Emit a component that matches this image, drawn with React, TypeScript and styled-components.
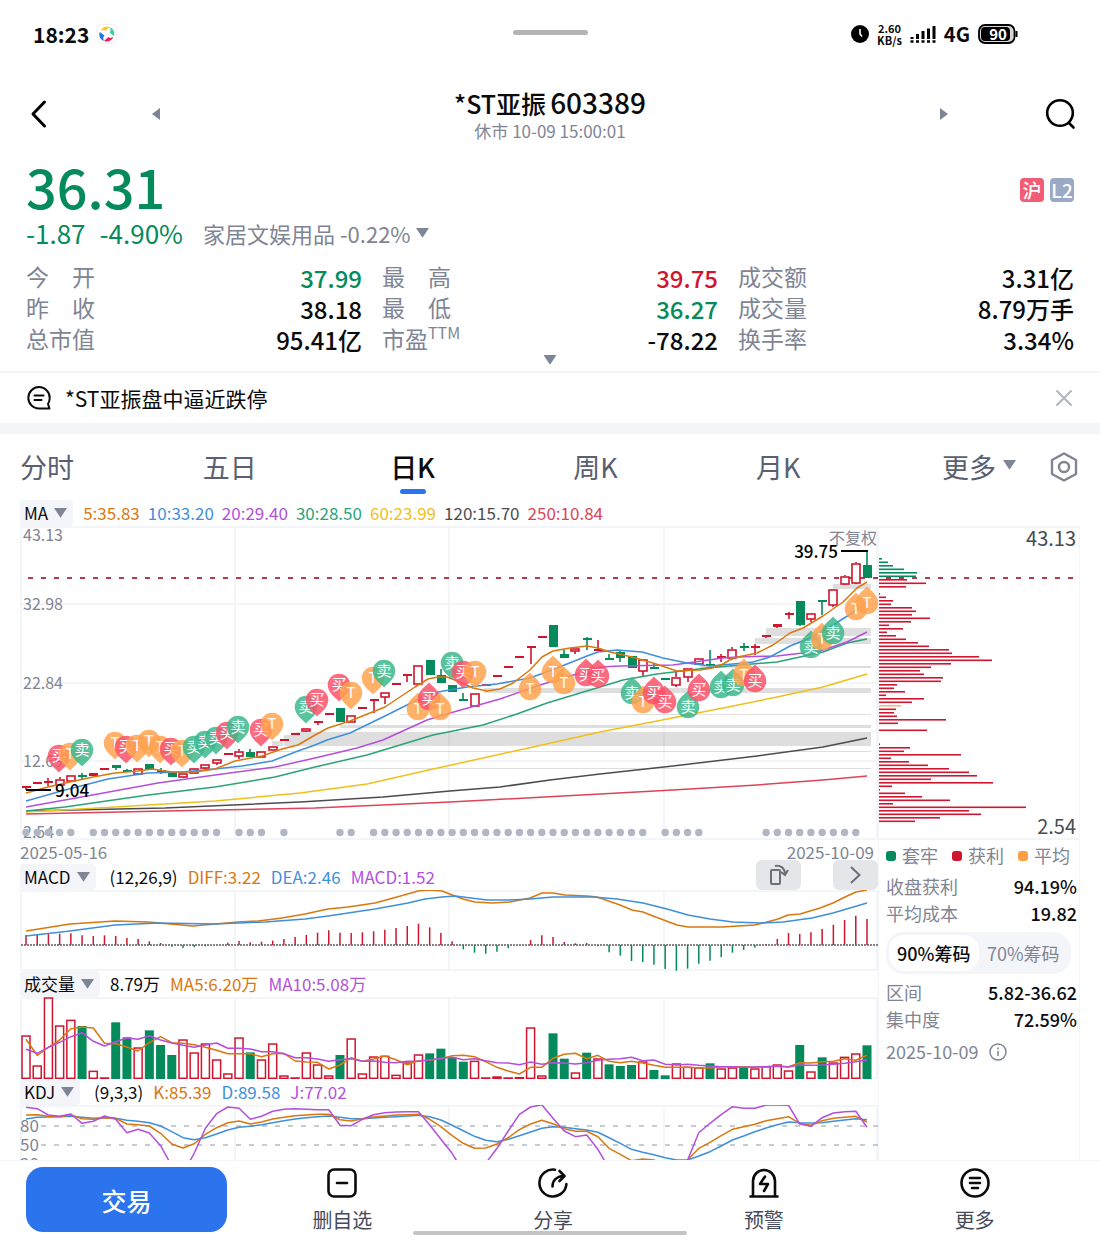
import React from "react";
import styled, { createGlobalStyle } from "styled-components";

const c = {
  ink: "#0b0b0d",
  label: "#7f8594",
  tab: "#5a6072",
  green: "#058a5c",
  red: "#d0152f",
  orange: "#d9780f",
  blue: "#3f8fdc",
  purple: "#b44fdc",
  teal: "#2aa376",
  yellow: "#efc01c",
  dark: "#4c4c50",
  rose: "#dd4457",
  line: "#f4f5f9",
  wash: "#f4f5f9",
  brand: "#2b74ee",
};

const GlobalStyle = createGlobalStyle`
  *, *::before, *::after { box-sizing: border-box; }
  body { margin: 0; background: #fff; color: ${c.ink}; font-family: "Noto Sans CJK SC", "Noto Sans", sans-serif; }
  button { font: inherit; color: inherit; background: none; border: 0; padding: 0; cursor: pointer; }
  h1, p, dl, dd { margin: 0; }
  svg { display: block; flex: none; }
`;

const Page = styled.main`
  position: relative;
  background: #fff;
`;

/* ---------- status bar ---------- */

const StatusBar = styled.div`
  display: grid;
  grid-template-columns: 1fr auto 1fr;
  align-items: center;
  height: 68px;
  padding: 0 82px 0 33px;
`;

const StatusSide = styled.div<{ $end?: boolean }>`
  display: flex;
  align-items: center;
  gap: 8px;
  justify-content: ${(p) => (p.$end ? "flex-end" : "flex-start")};
`;

const Clock = styled.span`
  font-size: 21px;
  line-height: 28px;
  font-weight: 700;
`;

const Handle = styled.div`
  width: 75px;
  height: 5px;
  margin-left: 49px;
  margin-bottom: 4px;
  border-radius: 3px;
  background: #b4b4b4;
`;

const Speed = styled.span`
  font-size: 11px;
  line-height: 12px;
  font-weight: 700;
  text-align: center;
`;

const Network = styled.span`
  font-size: 20px;
  line-height: 28px;
  font-weight: 700;
`;

/* ---------- header ---------- */

const Header = styled.header`
  display: grid;
  grid-template-columns: 138px 1fr 138px;
  align-items: center;
  height: 92px;
  padding: 0 24px;
`;

const HeaderSide = styled.div<{ $end?: boolean }>`
  display: flex;
  align-items: center;
  justify-content: space-between;
  flex-direction: ${(p) => (p.$end ? "row-reverse" : "row")};
`;

const IconButton = styled.button`
  display: flex;
  align-items: center;
  justify-content: center;
`;

const Heading = styled.div`
  text-align: center;
`;

const Title = styled.h1`
  font-size: 25px;
  line-height: 32px;
  font-weight: 500;
`;

const Code = styled.span`
  margin-left: 4px;
  font-size: 28px;
`;

const Subtitle = styled.p`
  font-size: 17px;
  line-height: 24px;
  color: ${c.label};
`;

/* ---------- quote ---------- */

const Quote = styled.section`
  position: relative;
  padding: 0 26px;
  height: 213px;
  border-bottom: 2px solid ${c.line};
`;

const PriceRow = styled.div`
  display: flex;
  align-items: flex-end;
  justify-content: space-between;
`;

const Price = styled.span`
  font-size: 54px;
  line-height: 52px;
  font-weight: 500;
  color: ${c.green};
`;

const Badges = styled.div`
  display: flex;
  gap: 6px;
  margin-bottom: 10px;
`;

const Badge = styled.span<{ $bg: string }>`
  width: 24px;
  height: 24px;
  border-radius: 4px;
  background: ${(p) => p.$bg};
  color: #fff;
  font-size: 19px;
  line-height: 24px;
  font-weight: 500;
  text-align: center;
`;

const ChangeRow = styled.div`
  display: flex;
  align-items: center;
  height: 32px;
  margin-top: 5px;
  font-size: 26px;
  line-height: 32px;
  color: ${c.green};
`;

const Change = styled.span`
  margin-right: 14px;
`;

const Sector = styled.button`
  display: flex;
  align-items: center;
  gap: 5px;
  margin-left: 6px;
  font-size: 22px;
  line-height: 32px;
  color: ${c.label};
`;

const Stats = styled.dl`
  display: grid;
  grid-template-columns: repeat(3, 1fr);
  column-gap: 20px;
  margin-top: 13px;
`;

const Stat = styled.div`
  display: flex;
  justify-content: space-between;
  height: 31px;
`;

const StatName = styled.dt`
  font-size: 23px;
  line-height: 28px;
  color: ${c.label};
  white-space: pre;
`;

const Sup = styled.sup`
  font-size: 16px;
  line-height: 0;
`;

const StatValue = styled.dd<{ $color?: string }>`
  font-size: 24px;
  line-height: 31px;
  font-weight: 500;
  color: ${(p) => p.$color ?? c.ink};
`;

const Expand = styled.button`
  position: absolute;
  left: 50%;
  bottom: 4px;
  transform: translateX(-50%);
`;

/* ---------- news ---------- */

const News = styled.section`
  display: flex;
  align-items: center;
  gap: 14px;
  height: 50px;
  padding: 0 27px;
`;

const NewsLink = styled.a`
  flex: 1;
  font-size: 21px;
  line-height: 30px;
  color: ${c.ink};
  text-decoration: none;
`;

const Band = styled.div`
  height: 11px;
  background: ${c.wash};
`;

/* ---------- period tabs ---------- */

const TabBar = styled.nav`
  display: flex;
  align-items: flex-start;
  gap: 53px;
  height: 66px;
  padding: 12px 21px 0 20px;
`;

const Tabs = styled.div`
  flex: 1;
  display: flex;
  align-items: flex-start;
  justify-content: space-between;
`;

const Tab = styled.button<{ $active?: boolean; $last?: boolean }>`
  position: relative;
  width: 54px;
  margin-left: ${(p) => (p.$last ? "8px" : "0")};
  font-size: 27px;
  line-height: 42px;
  font-weight: ${(p) => (p.$active ? 500 : 400)};
  color: ${(p) => (p.$active ? c.ink : c.tab)};
  white-space: nowrap;

  &::after {
    content: "";
    display: ${(p) => (p.$active ? "block" : "none")};
    width: 26px;
    height: 5px;
    margin: 1px auto 0;
    border-radius: 3px;
    background: ${c.brand};
  }
`;

const TabCaret = styled.span`
  position: absolute;
  left: 61px;
  top: 13px;
`;

/* ---------- charts ---------- */

const Board = styled.section`
  display: grid;
  grid-template-columns: minmax(0, 1fr) 202px;
  padding: 0 20px;
`;

const ChartColumn = styled.div`
  min-width: 0;
`;

const SideColumn = styled.aside`
  margin-top: 26px;
  border: solid ${c.line};
  border-width: 0 1px;
`;

const LegendRow = styled.div<{ $gap: number }>`
  position: relative;
  display: flex;
  align-items: center;
  gap: ${(p) => p.$gap}px;
  height: 26px;
  font-size: 17px;
  line-height: 26px;
  white-space: nowrap;
`;

const Picker = styled.button`
  display: flex;
  align-items: center;
  gap: 6px;
  height: 26px;
  padding: 0 6px 0 4px;
  border-radius: 4px;
  background: ${c.wash};
`;

const Readings = styled.div<{ $gap: number }>`
  display: flex;
  gap: ${(p) => p.$gap}px;
`;

const Reading = styled.span<{ $color?: string }>`
  color: ${(p) => p.$color ?? c.ink};
`;

const Plot = styled.svg`
  width: 100%;
  height: auto;
  font-family: "Noto Sans CJK SC", "Noto Sans", sans-serif;
`;

const DateRow = styled.div`
  display: flex;
  justify-content: space-between;
  height: 24px;
  padding-right: 4px;
  font-size: 17px;
  line-height: 24px;
  color: ${c.label};
`;

const Tools = styled.div`
  position: absolute;
  right: 0;
  top: -4px;
  display: flex;
  gap: 32px;
`;

const Tool = styled.button`
  display: flex;
  align-items: center;
  justify-content: center;
  width: 45px;
  height: 30px;
  border-radius: 6px;
  background: #e5e6e9;
`;

/* ---------- chip panel ---------- */

const ChipPanel = styled.div`
  padding: 2px 2px 0 7px;
  font-size: 18px;
  line-height: 27px;
  color: ${c.label};
`;

const ChipLegend = styled.div`
  display: flex;
  justify-content: space-between;
  height: 31px;
  padding-right: 7px;
`;

const ChipKey = styled.span<{ $color: string }>`
  display: flex;
  align-items: center;
  gap: 6px;
  height: 27px;

  &::before {
    content: "";
    width: 10px;
    height: 10px;
    border-radius: 3px;
    background: ${(p) => p.$color};
  }
`;

const ChipRow = styled.div`
  display: flex;
  justify-content: space-between;
`;

const ChipValue = styled.dd`
  color: ${c.ink};
  font-weight: 500;
`;

const Segment = styled.div`
  display: flex;
  width: 185px;
  height: 42px;
  margin: 5px 0;
  padding: 3px;
  border-radius: 18px;
  background: ${c.wash};
`;

const SegmentButton = styled.button<{ $active?: boolean }>`
  flex: 1;
  border-radius: 15px;
  line-height: 36px;
  white-space: nowrap;
  background: ${(p) => (p.$active ? "#fff" : "transparent")};
  color: ${(p) => (p.$active ? c.ink : c.label)};
  font-weight: ${(p) => (p.$active ? 500 : 400)};
`;

const ChipDate = styled.p`
  display: flex;
  align-items: center;
  gap: 11px;
  margin-top: 5px;
`;

/* ---------- bottom bar ---------- */

const BottomBar = styled.footer`
  position: relative;
  display: flex;
  height: 80px;
  padding: 6px 20px 8px 26px;
  background: #fff;
  border-top: 1px solid ${c.line};
`;

const Trade = styled.button`
  width: 201px;
  height: 65px;
  margin-right: 10px;
  border-radius: 17px;
  background: ${c.brand};
  color: #fff;
  font-size: 25px;
  font-weight: 500;
`;

const Action = styled.button`
  flex: 1;
  display: flex;
  flex-direction: column;
  align-items: center;
  gap: 6px;
  font-size: 20px;
  line-height: 30px;
  color: #464b5a;
`;

const HomeBar = styled.div`
  position: absolute;
  left: 50%;
  bottom: 5px;
  width: 274px;
  height: 4px;
  margin-left: -137px;
  border-radius: 2px;
  background: #c4c4c4;
`;

/* ---------- data ---------- */

const COUNT = 76;
const cx = (i: number) => 26 + (841 * i) / (COUNT - 1);

type Candle = [top: number, bottom: number, high: number, low: number, kind: "r" | "g" | "f"];

// r: hollow rise, f: thin filled rise, g: fall
const candles: Candle[] = [
  [786, 788, 786, 790, "f"], [782, 784, 782, 784, "f"], [781, 783, 778, 786, "f"], [779, 785, 777, 785, "r"],
  [775, 781, 775, 781, "r"], [775, 777, 773, 779, "g"], [773, 776, 773, 776, "f"], [768, 770, 768, 770, "f"],
  [765, 768, 765, 770, "g"], [770, 772, 769, 772, "g"], [768, 774, 768, 774, "r"], [764, 769, 764, 770, "g"],
  [770, 772, 768, 774, "g"], [773, 777, 773, 777, "g"], [773, 777, 773, 778, "r"], [768, 773, 768, 773, "r"],
  [764, 768, 764, 769, "r"], [759, 763, 759, 765, "r"], [753, 755, 753, 755, "f"], [751, 756, 749, 759, "r"],
  [752, 757, 749, 757, "g"], [751, 757, 751, 757, "r"], [746, 750, 746, 750, "r"], [739, 741, 739, 741, "f"],
  [733, 735, 733, 735, "f"], [728, 731, 728, 732, "r"], [721, 723, 721, 725, "f"], [713, 715, 713, 715, "f"],
  [708, 722, 708, 722, "g"], [715, 722, 715, 722, "r"], [707, 709, 707, 709, "f"], [699, 701, 699, 713, "f"],
  [692, 697, 692, 704, "r"], [683, 685, 683, 685, "f"], [674, 676, 674, 682, "f"], [665, 684, 665, 684, "r"],
  [660, 675, 660, 675, "g"], [675, 683, 669, 683, "g"], [685, 692, 685, 692, "g"], [699, 701, 693, 701, "g"],
  [693, 706, 693, 706, "r"], [684, 686, 684, 686, "f"], [675, 677, 675, 677, "f"], [666, 668, 666, 668, "f"],
  [656, 658, 656, 658, "f"], [646, 648, 646, 664, "f"], [636, 638, 636, 638, "f"], [625, 647, 625, 647, "g"],
  [654, 658, 650, 658, "g"], [648, 651, 648, 654, "r"], [638, 640, 637, 650, "g"], [649, 651, 640, 651, "f"],
  [658, 660, 654, 660, "g"], [652, 658, 651, 662, "g"], [656, 668, 656, 668, "g"], [659, 671, 659, 676, "r"],
  [667, 669, 664, 669, "g"], [678, 680, 678, 680, "g"], [677, 685, 672, 687, "r"], [668, 677, 668, 682, "r"],
  [658, 664, 658, 664, "r"], [664, 666, 650, 666, "g"], [656, 658, 654, 662, "f"], [649, 658, 647, 660, "r"],
  [646, 648, 643, 651, "g"], [646, 648, 644, 655, "f"], [635, 637, 635, 638, "f"], [624, 627, 624, 628, "f"],
  [613, 615, 612, 619, "f"], [601, 625, 601, 626, "g"], [613, 619, 613, 622, "r"], [600, 602, 600, 615, "g"],
  [589, 605, 589, 607, "r"], [576, 584, 575, 585, "r"], [563, 583, 562, 584, "r"], [565, 578, 551, 578, "g"],
];

const averages: [string, string][] = [
  [c.rose, "26,814 165,811 315,808 450,802 600,794 673,790 757,785 823,780 867,776"],
  [c.dark, "26,811 165,808 300,802 383,797 450,791 500,787 550,780 600,774 673,766 757,756 823,747 867,738"],
  [c.yellow, "26,812 115,807 215,801 300,793 367,784 433,769 483,758 533,747 600,732 657,721 723,708 777,697 823,687 867,674"],
  [c.teal, "26,811 65,807 148,795 215,787 275,777 315,767 367,755 433,735 483,725 517,714 547,703 600,687 623,680 657,674 707,668 740,665 777,662 823,652 847,643 867,639"],
  [c.purple, "26,807 87,796 158,783 215,775 275,767 315,758 357,748 383,740 427,720 450,713 500,699 540,685 577,674 600,667 620,666 673,665 723,658 737,657 777,656 820,651 847,642 867,632"],
  [c.blue, "26,801 65,790 108,779 148,773 182,772 215,769 242,766 272,761 298,751 315,745 327,740 350,733 383,717 417,700 438,692 467,687 497,684 530,678 557,668 587,656 598,652 617,650 642,652 663,658 687,663 710,666 733,664 753,662 770,657 790,646 810,638 833,625 857,610 867,602"],
  [c.orange, "26,793 48,787 70,782 93,777 115,773 138,771 152,769 172,772 195,772 215,769 235,761 262,756 282,749 298,745 315,735 328,728 350,721 385,707 400,697 415,687 428,679 438,677 447,677 460,682 473,688 487,691 500,689 513,683 530,670 542,657 553,651 570,648 587,646 598,648 610,652 632,657 653,663 677,671 700,670 712,668 723,664 733,658 757,653 773,645 790,633 803,628 823,616 843,602 857,588 867,582"],
];

type Pin = [x: number, y: number, mark: "买" | "卖" | "T", up: 0 | 1];

const pins: Pin[] = [
  [59, 756, "买", 0], [70, 754, "T", 0], [82, 750, "卖", 0], [115, 743, "T", 0], [126, 747, "买", 0], [137, 746, "T", 0],
  [149, 741, "T", 0], [160, 747, "T", 0], [171, 749, "买", 0], [182, 751, "T", 0], [194, 747, "卖", 0], [205, 742, "卖", 0],
  [216, 738, "卖", 0], [227, 733, "买", 0], [238, 727, "卖", 0], [261, 730, "买", 0], [272, 724, "T", 0], [306, 707, "卖", 0],
  [317, 700, "买", 0], [339, 685, "买", 0], [351, 693, "T", 0], [373, 678, "T", 0], [384, 671, "卖", 0], [418, 709, "T", 1],
  [429, 699, "买", 1], [440, 709, "T", 1], [452, 663, "卖", 0], [463, 672, "买", 0], [475, 672, "T", 0], [530, 689, "T", 1],
  [553, 672, "T", 1], [564, 683, "T", 1], [586, 675, "买", 1], [598, 676, "买", 1], [632, 693, "卖", 1], [643, 702, "T", 1],
  [654, 693, "买", 1], [665, 702, "买", 1], [688, 707, "卖", 1], [699, 690, "买", 1], [721, 687, "卖", 1], [733, 685, "卖", 1],
  [744, 675, "T", 1], [755, 681, "买", 1], [811, 647, "卖", 1], [822, 639, "T", 1], [833, 633, "卖", 1], [856, 609, "T", 1],
  [867, 603, "T", 1],
];

const pinColor = { 买: "#fb5068", 卖: "#3ab88c", T: "#ffa24c" };

const dotRuns = [[0, 4], [6, 17], [19, 21], [23, 23], [28, 29], [31, 55], [57, 60], [66, 74]];

const gaps: [number, number, number][] = [
  [833, 584, 5], [766, 628, 8], [755, 638, 6], [700, 666, 2], [484, 688, 5], [400, 714, 1], [340, 725, 3],
  [295, 732, 14], [284, 735, 11], [272, 741, 5], [261, 751, 1], [194, 768, 1],
];

// Length of each price level's bar; the level step is constant.
const levels = [
  4, 10, 15, 26, 39, 38, 29, 48, 28, 0, 2, 8, 15, 13, 34, 38, 34, 52, 33, 11, 25, 9, 18, 28, 40, 51, 71, 74, 101, 114, 73,
  53, 42, 46, 65, 63, 19, 16, 27, 8, 46, 34, 23, 18, 16, 19, 68, 20, 0, 49, 0, 1, 0, 2, 32, 26, 83, 13, 31, 50, 71, 91, 99,
  53, 115, 14, 2, 27, 44, 72, 15, 148, 91, 103, 62, 37,
];

// Indicator series are kept in thirds of a plot unit, measured down from the axis row.
const row = (v: number) => 840 + v / 3;
const path = (s: number[]) => s.map((v, i) => `${cx(i).toFixed(1)},${row(v).toFixed(1)}`).join(" ");

const macd = [
  285, 283, 281, 281, 280, 286, 288, 286, 288, 294, 297, 304, 309, 320, 324, 322, 319, 315, 308, 303, 307, 305, 302, 297, 291,
  285, 278, 271, 278, 279, 277, 274, 269, 264, 258, 251, 262, 279, 304, 328, 338, 341, 335, 325, 315, 300, 286, 291, 306, 310,
  309, 319, 337, 347, 363, 366, 374, 387, 392, 386, 371, 362, 352, 338, 330, 323, 312, 297, 279, 282, 277, 267, 254, 240, 227,
  237,
];

const diff =
  "26,931 70,924 115,921 148,922 170,924 193,926 215,924 238,922 258,921 282,918 305,914 328,909 348,907 375,903 397,897 418,891 430,890 442,891 455,896 463,899 475,902 492,903 510,902 530,898 542,893 553,893 565,895 587,896 597,897 620,905 632,910 643,912 653,916 677,925 688,927 722,927 755,925 767,922 778,919 788,915 800,914 820,908 833,903 845,897 856,892 867,890";
const dea =
  "26,936 70,931 115,925 158,923 215,924 265,922 305,919 328,916 375,909 408,903 425,899 442,897 455,896 463,897 487,900 510,900 530,899 553,897 593,897 617,899 643,903 667,909 688,915 710,919 733,922 760,923 783,922 812,918 833,913 850,908 867,903";

const volume = [
  586, 676, 472, 556, 539, 558, 692, 712, 547, 592, 622, 571, 615, 645, 598, 637, 610, 658, 700, 592, 637, 658, 610, 706, 712,
  637, 673, 706, 645, 595, 700, 649, 647, 704, 667, 643, 640, 626, 652, 665, 662, 712, 709, 712, 711, 562, 706, 580, 656, 697,
  638, 655, 673, 678, 675, 664, 690, 706, 670, 680, 682, 670, 685, 682, 682, 685, 678, 673, 691, 615, 694, 652, 667, 650, 640,
  616,
];
const falls = new Set([5, 8, 9, 11, 12, 13, 20, 28, 36, 37, 38, 39, 47, 48, 50, 52, 53, 54, 56, 57, 61, 64, 69, 71, 75]);
const vol5 = [
  598, 646, 622, 600, 566, 561, 564, 610, 611, 621, 633, 608, 590, 608, 610, 614, 622, 631, 641, 641, 641, 650, 641, 640, 663,
  666, 667, 687, 675, 653, 664, 657, 648, 659, 674, 662, 660, 656, 647, 646, 650, 665, 682, 693, 702, 682, 682, 655, 643, 640,
  656, 646, 664, 668, 664, 669, 676, 682, 682, 682, 684, 684, 680, 680, 680, 682, 680, 678, 680, 668, 669, 665, 664, 656, 661,
  646,
];
const vol10 = [
  628, 640, 622, 607, 590, 578, 604, 618, 605, 594, 598, 587, 600, 609, 616, 622, 615, 609, 625, 625, 627, 635, 635, 641, 653,
  653, 657, 664, 659, 656, 664, 663, 667, 668, 664, 664, 660, 655, 652, 659, 656, 662, 668, 669, 674, 666, 673, 668, 669, 672,
  668, 661, 658, 656, 652, 662, 660, 673, 675, 673, 676, 678, 680, 680, 682, 681, 680, 679, 681, 675, 676, 675, 673, 670, 665,
  660,
];

const kdjJ = [
  802, 806, 825, 829, 822, 850, 844, 828, 838, 878, 868, 879, 917, 978, 1000, 940, 865, 821, 801, 805, 838, 829, 814, 808, 806,
  808, 809, 809, 856, 857, 838, 824, 818, 816, 815, 815, 855, 898, 940, 995, 1050, 970, 925, 873, 823, 801, 794, 835, 873, 890,
  885, 928, 985, 1100, 1100, 1100, 1100, 1100, 1050, 960, 878, 850, 824, 800, 805, 805, 795, 795, 796, 852, 859, 833, 819, 815,
  814, 862,
];
const kdjK = [
  825, 824, 829, 830, 825, 836, 838, 833, 835, 852, 854, 858, 880, 912, 924, 911, 883, 863, 848, 843, 852, 846, 837, 832, 827,
  825, 823, 823, 839, 843, 836, 831, 828, 825, 824, 823, 838, 860, 887, 910, 925, 924, 912, 893, 869, 852, 841, 851, 866, 874,
  874, 890, 925, 943, 962, 957, 960, 975, 975, 960, 925, 907, 887, 868, 860, 853, 842, 836, 830, 850, 856, 842, 835, 832, 829,
  846,
];
const kdjD = [
  837, 832, 831, 830, 829, 832, 835, 833, 835, 841, 844, 848, 858, 875, 893, 899, 893, 882, 870, 862, 859, 854, 848, 842, 837,
  833, 830, 828, 832, 836, 836, 834, 832, 830, 828, 826, 830, 840, 856, 872, 889, 901, 905, 898, 887, 876, 865, 860, 862, 866,
  870, 877, 893, 910, 928, 937, 944, 953, 960, 960, 948, 935, 918, 900, 888, 875, 864, 854, 846, 848, 849, 848, 844, 840, 836,
  839,
];

/* ---------- pieces ---------- */

const Caret = ({ w = 13, dir = "down" }: { w?: number; dir?: "down" | "left" | "right" }) => {
  const d = { down: "M0 1h12L6 10z", left: "M10 0v12L2 6z", right: "M2 0v12l8-6z" }[dir];
  return (
    <svg width={w} height={w} viewBox="0 0 12 12" fill="#7f8594" aria-hidden="true">
      <path d={d} />
    </svg>
  );
};

const Frame = ({ top, bottom }: { top: number; bottom: number }) => (
  <g stroke={c.line} strokeWidth="2" fill="none">
    <path d={`M20 ${top + 1}H878M20 ${bottom - 1}H878`} />
    <path d={`M21 ${top}V${bottom}M235 ${top}V${bottom}M449 ${top}V${bottom}M664 ${top}V${bottom}M877 ${top}V${bottom}`} />
  </g>
);

const Line = ({ points, color }: { points: string; color: string }) => (
  <polyline points={points} fill="none" stroke={color} strokeWidth="1.5" strokeLinejoin="round" />
);

const CandleMark = ({ i, data }: { i: number; data: Candle }) => {
  const [top, bottom, high, low, kind] = data;
  const x = Math.round(cx(i));
  const color = kind === "g" ? c.green : c.red;
  return (
    <g stroke={color} strokeWidth="1.6" fill={kind === "r" ? "#fff" : color}>
      {high < top && <path d={`M${x} ${high}V${top}`} />}
      {low > bottom && <path d={`M${x} ${bottom}V${low}`} />}
      {kind === "r" ? (
        <rect x={x - 4} y={top + 1} width="8" height={Math.max(bottom - top - 1, 2)} />
      ) : (
        <rect x={x - 4} y={top} width="9" height={bottom - top} stroke="none" />
      )}
    </g>
  );
};

const PinMark = ({ pin }: { pin: Pin }) => {
  const [x, y, mark, up] = pin;
  return (
    <g transform={`translate(${x} ${y})`}>
      <path
        d="M0 16.500C-3 13-11.300 8-11.300 0A11.300 11.300 0 1 1 11.300 0C11.300 8 3 13 0 16.500Z"
        fill={pinColor[mark]}
        fillOpacity="0.84"
        transform={up ? "rotate(180)" : undefined}
      />
      <text y="5" fontSize="15" textAnchor="middle" fill="#fff">
        {mark}
      </text>
    </g>
  );
};

const PriceChart = () => (
  <Plot viewBox="20 526 858 314" role="img" aria-label="日K">
    <Frame top={526} bottom={840} />
    <path d="M20 604H878M20 683H878M20 761H878" stroke={c.line} strokeWidth="2" />
    <g fill={c.label} fontSize="16">
      <text x="23" y="541">43.13</text>
      <text x="23" y="610">32.98</text>
      <text x="23" y="689">22.84</text>
      <text x="23" y="767">12.69</text>
      <text x="23" y="838">2.54</text>
      <text x="877" y="544" textAnchor="end">不复权</text>
    </g>
    <g fill="#000" fillOpacity="0.13">
      {gaps.map(([x, y, h]) => (
        <rect key={`${x}-${y}`} x={x} y={y} width={x === 284 || x === 272 ? 11 : 871 - x} height={h} />
      ))}
    </g>
    <path d="M28 578H878" stroke="#b3394c" strokeWidth="2" strokeDasharray="5 8" />
    {candles.map((d, i) => (
      <CandleMark key={i} i={i} data={d} />
    ))}
    {averages.map(([color, points]) => (
      <Line key={color} color={color} points={points} />
    ))}
    <path d="M26 790H51M841 551H868" stroke="#000" strokeWidth="2" />
    <g fill="#000" fontSize="17" fontWeight="500">
      <text x="55" y="797">9.04</text>
      <text x="838" y="558" textAnchor="end">39.75</text>
    </g>
    {pins.map((p) => (
      <PinMark key={`${p[0]}-${p[1]}`} pin={p} />
    ))}
    <g fill="#b1b6c4">
      {dotRuns.flatMap(([from, to]) =>
        Array.from({ length: to - from + 1 }, (_, k) => <circle key={from + k} cx={cx(from + k)} cy="832.5" r="3.7" />)
      )}
    </g>
  </Plot>
);

const ChipChart = () => (
  <Plot viewBox="879 526 200 314" role="img" aria-label="筹码分布">
    <path d="M878 527H1079M878 839H1079" stroke={c.line} strokeWidth="2" />
    {levels.map((len, i) => (
      <rect
        key={i}
        x="878"
        y={558 + i * 3.5}
        width={len}
        height="1.6"
        fill={i < 6 ? c.green : i === 42 ? "#efb98a" : c.red}
      />
    ))}
    <path d="M886 578H1075" stroke="#b3394c" strokeWidth="2" strokeDasharray="5 8" />
    <g fill="#474b55" fontSize="20" textAnchor="end">
      <text x="1076" y="546">43.13</text>
      <text x="1076" y="834">2.54</text>
    </g>
  </Plot>
);

const MacdChart = () => (
  <Plot viewBox="20 890 858 81" role="img" aria-label="MACD">
    <Frame top={890} bottom={971} />
    {macd.map((v, i) => (
      <path key={i} d={`M${cx(i)} 945V${row(v)}`} stroke={v < 315 ? c.red : c.green} strokeWidth="1.5" />
    ))}
    <path d="M21 945H878" stroke="#5c5c5c" strokeWidth="1.5" strokeDasharray="2 1" />
    <Line color={c.orange} points={diff} />
    <Line color={c.blue} points={dea} />
  </Plot>
);

const VolumeChart = () => (
  <Plot viewBox="20 997 858 82" role="img" aria-label="成交量">
    <Frame top={997} bottom={1079} />
    {volume.map((v, i) =>
      falls.has(i) ? (
        <rect key={i} x={cx(i) - 4.5} y={row(v)} width="9" height={1079 - row(v)} fill={c.green} />
      ) : (
        <rect
          key={i}
          x={cx(i) - 4}
          y={row(v) + 0.7}
          width="8"
          height={Math.max(1077.6 - row(v), 0.5)}
          fill="#fff"
          stroke={c.red}
          strokeWidth="1.5"
        />
      )
    )}
    <Line color={c.orange} points={path(vol5)} />
    <Line color={c.purple} points={path(vol10)} />
  </Plot>
);

const KdjChart = () => (
  <Plot viewBox="20 1105 858 55" role="img" aria-label="KDJ">
    <Frame top={1105} bottom={1180} />
    <path d="M41 1126H878M41 1145H878" stroke="#b4b9c5" strokeWidth="1.5" strokeDasharray="5 8" />
    <g fill={c.label} fontSize="17">
      <text x="20" y="1132">80</text>
      <text x="20" y="1151">50</text>
      <text x="20" y="1170">20</text>
    </g>
    <Line color={c.blue} points={path(kdjD)} />
    <Line color={c.orange} points={path(kdjK)} />
    <Line color={c.purple} points={path(kdjJ)} />
  </Plot>
);

const stats: { name: React.ReactNode; value: string; color?: string }[] = [
  { name: "今　开", value: "37.99", color: c.green },
  { name: "最　高", value: "39.75", color: c.red },
  { name: "成交额", value: "3.31亿" },
  { name: "昨　收", value: "38.18" },
  { name: "最　低", value: "36.27", color: c.green },
  { name: "成交量", value: "8.79万手" },
  { name: "总市值", value: "95.41亿" },
  { name: <>市盈<Sup>TTM</Sup></>, value: "-78.22" },
  { name: "换手率", value: "3.34%" },
];

const Icon = ({ children }: { children: React.ReactNode }) => (
  <svg width="32" height="32" viewBox="0 0 32 32" fill="none" stroke="#0b0b0d" strokeWidth="2.6" strokeLinecap="round" strokeLinejoin="round" aria-hidden="true">
    {children}
  </svg>
);

export default function App() {
  return (
    <Page>
      <GlobalStyle />
      <StatusBar>
        <StatusSide>
          <Clock>18:23</Clock>
          <svg width="20" height="20" viewBox="0 0 20 20" aria-hidden="true">
            <rect x=".5" y=".5" width="19" height="19" rx="4" fill="#fff" stroke="#eef0f3" />
            <path d="M3.500 7.500C5 3 9 1.500 12.500 3L8.500 7C7 5.500 5 6 3.500 7.500z" fill="#fdc91c" />
            <path d="M12.500 3C16.500 4.500 18 8.500 17 12L12.500 8.500C14 7 14 5 12.500 3z" fill="#3ccca4" />
            <path d="M16.500 12.500C15 17 10.500 18.500 7 17L11.500 13C13 14.500 15 14 16.500 12.500z" fill="#ee1a5c" />
            <path d="M7 17C3 15.500 1.500 11.500 2.800 8L7.500 11.500C6 13 6 15 7 17z" fill="#1c76ea" />
          </svg>
        </StatusSide>
        <Handle />
        <StatusSide $end>
          <svg width="18" height="18" viewBox="0 0 18 18" aria-hidden="true">
            <circle cx="9" cy="9" r="9" fill="#000" />
            <path d="M9 4v5l2 2.500" fill="none" stroke="#fff" strokeWidth="1.600" />
          </svg>
          <Speed>
            2.60
            <br />
            KB/s
          </Speed>
          <svg width="26" height="20" viewBox="0 0 26 20" aria-hidden="true">
            <path d="M2 13v2M7.500 10v5M13 7v8M18.500 4.500v10.500M24 2v13" stroke="#000" strokeWidth="3" />
            <path d="M.5 17.500h3M6 17.500h3M11.500 17.500h3M17 17.500h3M22.500 17.500h3" stroke="#000" strokeWidth="2.400" />
          </svg>
          <Network>4G</Network>
          <svg width="40" height="20" viewBox="0 0 40 20" aria-hidden="true">
            <rect x="1" y="1" width="35.500" height="18" rx="6" fill="#d6d6d6" stroke="#000" strokeWidth="1.800" />
            <rect x="3" y="3" width="29" height="14" rx="4" fill="#000" />
            <path d="M38.500 7v6" stroke="#000" strokeWidth="2" />
            <text x="20" y="15.500" fontSize="15" fontWeight="700" textAnchor="middle" fill="#fff">90</text>
          </svg>
        </StatusSide>
      </StatusBar>

      <Header>
        <HeaderSide>
          <IconButton aria-label="返回">
            <svg width="28" height="32" viewBox="0 0 28 32" fill="none" stroke="#000" strokeWidth="3" strokeLinecap="round" strokeLinejoin="round">
              <path d="M20.500 4L9 16l11.500 12" />
            </svg>
          </IconButton>
          <IconButton aria-label="上一只">
            <Caret w={12} dir="left" />
          </IconButton>
        </HeaderSide>
        <Heading>
          <Title>
            *ST亚振<Code>603389</Code>
          </Title>
          <Subtitle>休市 10-09 15:00:01</Subtitle>
        </Heading>
        <HeaderSide $end>
          <IconButton aria-label="搜索">
            <svg width="32" height="32" viewBox="0 0 32 32" fill="none" stroke="#000" strokeWidth="2.600" strokeLinecap="round">
              <circle cx="16" cy="15" r="12.800" />
              <path d="M25 25l4.500 4.500" />
            </svg>
          </IconButton>
          <IconButton aria-label="下一只">
            <Caret w={12} dir="right" />
          </IconButton>
        </HeaderSide>
      </Header>

      <Quote>
        <PriceRow>
          <Price>36.31</Price>
          <Badges>
            <Badge $bg="#f25c74">沪</Badge>
            <Badge $bg="#9aaac4">L2</Badge>
          </Badges>
        </PriceRow>
        <ChangeRow>
          <Change>-1.87</Change>
          <Change>-4.90%</Change>
          <Sector>
            <span>家居文娱用品 -0.22%</span>
            <Caret />
          </Sector>
        </ChangeRow>
        <Stats>
          {stats.map((s, i) => (
            <Stat key={i}>
              <StatName>{s.name}</StatName>
              <StatValue $color={s.color}>{s.value}</StatValue>
            </Stat>
          ))}
        </Stats>
        <Expand aria-label="展开">
          <Caret />
        </Expand>
      </Quote>

      <News>
        <svg width="24" height="24" viewBox="0 0 24 24" fill="none" stroke="#0b0b0d" strokeWidth="2" strokeLinecap="round" strokeLinejoin="round" aria-hidden="true">
          <path d="M22.500 22.500H12A10.700 10.700 0 1 1 22.700 12c0 2.600-.7 4.300-1.700 6z" />
          <path d="M7.500 9.500h9M7.500 14h7" />
        </svg>
        <NewsLink href="#news">*ST亚振盘中逼近跌停</NewsLink>
        <IconButton aria-label="关闭">
          <svg width="18" height="18" viewBox="0 0 18 18" stroke="#b0b5c2" strokeWidth="2" strokeLinecap="round">
            <path d="M2 2l14 14M16 2L2 16" />
          </svg>
        </IconButton>
      </News>
      <Band />

      <TabBar>
        <Tabs>
          <Tab>分时</Tab>
          <Tab>五日</Tab>
          <Tab $active>日K</Tab>
          <Tab>周K</Tab>
          <Tab>月K</Tab>
          <Tab $last>
            更多
            <TabCaret>
              <Caret />
            </TabCaret>
          </Tab>
        </Tabs>
        <IconButton aria-label="设置">
          <svg width="30" height="42" viewBox="0 0 30 42" fill="none" stroke="#7f8594" strokeWidth="2.400" strokeLinejoin="round">
            <path d="M15 7.500l12 6.500v14L15 34.500 3 28V14z" />
            <circle cx="15" cy="21" r="5" />
          </svg>
        </IconButton>
      </TabBar>

      <Board>
        <ChartColumn>
          <LegendRow $gap={10}>
            <Picker>
              MA <Caret />
            </Picker>
            <Readings $gap={8}>
              <Reading $color={c.orange}>5:35.83</Reading>
              <Reading $color={c.blue}>10:33.20</Reading>
              <Reading $color={c.purple}>20:29.40</Reading>
              <Reading $color={c.teal}>30:28.50</Reading>
              <Reading $color={c.yellow}>60:23.99</Reading>
              <Reading $color={c.dark}>120:15.70</Reading>
              <Reading $color={c.rose}>250:10.84</Reading>
            </Readings>
          </LegendRow>
          <PriceChart />
          <DateRow>
            <time>2025-05-16</time>
            <time>2025-10-09</time>
          </DateRow>
          <LegendRow $gap={14}>
            <Picker>
              MACD <Caret />
            </Picker>
            <Readings $gap={10}>
              <Reading>(12,26,9)</Reading>
              <Reading $color={c.orange}>DIFF:3.22</Reading>
              <Reading $color={c.blue}>DEA:2.46</Reading>
              <Reading $color={c.purple}>MACD:1.52</Reading>
            </Readings>
            <Tools>
              <Tool aria-label="横屏">
                <svg width="22" height="24" viewBox="0 0 22 24" fill="none" stroke="#6c6f76" strokeWidth="2">
                  <rect x="3" y="7" width="9" height="14" rx="1" />
                  <path d="M7 3c6-1 9.500 2 10 8M13 9l4 3 3-5" />
                </svg>
              </Tool>
              <Tool aria-label="收起">
                <svg width="18" height="20" viewBox="0 0 18 20" fill="none" stroke="#6c6f76" strokeWidth="2">
                  <path d="M4 2l8.500 8L4 18" />
                </svg>
              </Tool>
            </Tools>
          </LegendRow>
          <MacdChart />
          <LegendRow $gap={10}>
            <Picker>
              成交量 <Caret />
            </Picker>
            <Readings $gap={10}>
              <Reading>8.79万</Reading>
              <Reading $color={c.orange}>MA5:6.20万</Reading>
              <Reading $color={c.purple}>MA10:5.08万</Reading>
            </Readings>
          </LegendRow>
          <VolumeChart />
          <LegendRow $gap={14}>
            <Picker>
              KDJ <Caret />
            </Picker>
            <Readings $gap={10}>
              <Reading>(9,3,3)</Reading>
              <Reading $color={c.orange}>K:85.39</Reading>
              <Reading $color={c.blue}>D:89.58</Reading>
              <Reading $color={c.purple}>J:77.02</Reading>
            </Readings>
          </LegendRow>
          <KdjChart />
        </ChartColumn>

        <SideColumn>
          <ChipChart />
          <ChipPanel>
            <ChipLegend>
              <ChipKey $color={c.green}>套牢</ChipKey>
              <ChipKey $color={c.red}>获利</ChipKey>
              <ChipKey $color="#ff9f43">平均</ChipKey>
            </ChipLegend>
            <dl>
              <ChipRow>
                <dt>收盘获利</dt>
                <ChipValue>94.19%</ChipValue>
              </ChipRow>
              <ChipRow>
                <dt>平均成本</dt>
                <ChipValue>19.82</ChipValue>
              </ChipRow>
            </dl>
            <Segment>
              <SegmentButton $active>90%筹码</SegmentButton>
              <SegmentButton>70%筹码</SegmentButton>
            </Segment>
            <dl>
              <ChipRow>
                <dt>区间</dt>
                <ChipValue>5.82-36.62</ChipValue>
              </ChipRow>
              <ChipRow>
                <dt>集中度</dt>
                <ChipValue>72.59%</ChipValue>
              </ChipRow>
            </dl>
            <ChipDate>
              2025-10-09
              <svg width="18" height="18" viewBox="0 0 18 18" fill="none" stroke="#7f8594" strokeWidth="1.500" aria-hidden="true">
                <circle cx="9" cy="9" r="8" />
                <path d="M9 8v5M9 4.500v2" />
              </svg>
            </ChipDate>
          </ChipPanel>
        </SideColumn>
      </Board>

      <BottomBar>
        <Trade>交易</Trade>
        <Action>
          <Icon>
            <rect x="2.500" y="2.500" width="27" height="27" rx="5.500" />
            <path d="M11 16h10" />
          </Icon>
          删自选
        </Action>
        <Action>
          <Icon>
            <path d="M18 2.700A13.500 13.500 0 1 0 29.400 17" />
            <path d="M15.500 19.500c0-6 4-10 11-10.500M22.500 4l5 5-5 5" />
          </Icon>
          分享
        </Action>
        <Action>
          <Icon>
            <path d="M2.500 29.500h27M5 29V14a11 11 0 0 1 22 0v15" />
            <path d="M17 9.500l-5 7.500h8l-4 7" />
          </Icon>
          预警
        </Action>
        <Action>
          <Icon>
            <circle cx="16" cy="16" r="13.500" />
            <path d="M11 11h10M11 16h10M13 21h6" />
          </Icon>
          更多
        </Action>
        <HomeBar />
      </BottomBar>
    </Page>
  );
}
